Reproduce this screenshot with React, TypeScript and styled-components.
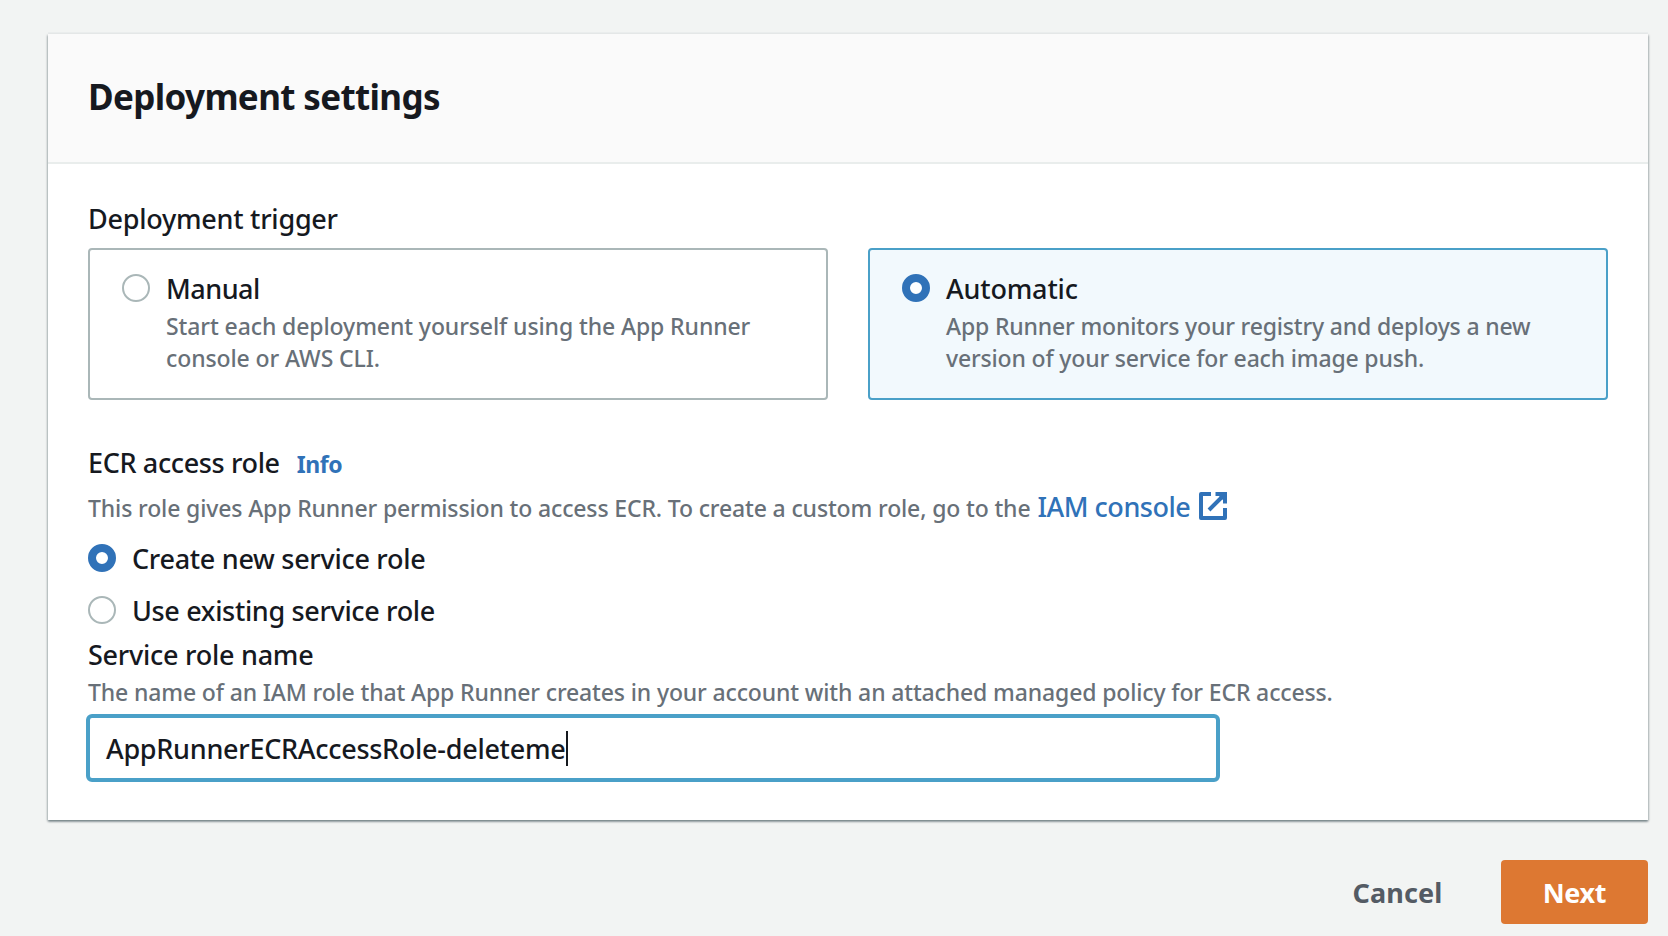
import React from 'react';
import styled, { createGlobalStyle, css } from 'styled-components';

const color = {
  page: '#f2f4f3',
  text: '#16191f',
  secondary: '#687078',
  link: '#3072b8',
  focus: '#4aa0c8',
  control: '#aab7b8',
  divider: '#e9edec',
  selected: '#f2f9fd',
  primary: '#dd7832',
};

const GlobalStyle = createGlobalStyle`
  * { box-sizing: border-box; }
  body {
    margin: 0;
    background: ${color.page};
    color: ${color.text};
    font-family: "Noto Sans", "Open Sans", sans-serif;
    font-size: 27px;
    font-weight: 500;
    line-height: 44px;
    overflow: hidden;
  }
`;

const Page = styled.main`
  height: 936px;
  padding: 34px 20px 0 48px;
`;

const Panel = styled.section`
  height: 786px;
  background: #fff;
  box-shadow: 0 2px 2px 0 rgba(0, 28, 36, 0.3), 1px 1px 2px 0 rgba(0, 28, 36, 0.2),
    -1px 1px 2px 0 rgba(0, 28, 36, 0.2), 0 -2px 0 0 #eaeded;
`;

const PanelHeader = styled.header`
  display: flex;
  align-items: center;
  height: 130px;
  padding: 0 40px 2px;
  background: #fafafa;
  border-bottom: 2px solid ${color.divider};
`;

const Title = styled.h2`
  margin: 0;
  font-size: 35px;
  font-weight: 700;
  letter-spacing: -0.64px;
`;

const PanelBody = styled.div`
  padding: 32px 40px 0;
`;

const Label = styled.div<{ $spacing?: number }>`
  display: flex;
  align-items: baseline;
  height: 44px;
  padding-top: 1px;
  letter-spacing: ${(p) => p.$spacing ?? -0.25}px;
  white-space: nowrap;
`;

const Description = styled.div<{ $spacing?: number }>`
  color: ${color.secondary};
  font-size: 23px;
  line-height: 32px;
  letter-spacing: ${(p) => p.$spacing ?? -0.14}px;
  white-space: nowrap;
`;

const Tiles = styled.div`
  display: grid;
  grid-template-columns: 1fr 1fr;
  gap: 40px;
  margin: 8px 0 40px;
`;

const Tile = styled.label<{ $selected?: boolean }>`
  display: flex;
  gap: 16px;
  height: 152px;
  padding: 16px 32px;
  border: 2px solid ${(p) => (p.$selected ? color.focus : color.control)};
  border-radius: 4px;
  background: ${(p) => (p.$selected ? color.selected : '#fff')};
`;

const Radio = styled.span<{ $checked?: boolean }>`
  flex: none;
  width: 28px;
  height: 28px;
  margin-top: 8px;
  border-radius: 50%;
  background: #fff;
  border: 2px solid ${color.control};
  ${(p) =>
    p.$checked &&
    css`
      border: 8px solid ${color.link};
    `}
`;

const RadioGroup = styled.div`
  display: flex;
  flex-direction: column;
  gap: 8px;
  padding-top: 8px;
`;

const RadioRow = styled.label`
  display: flex;
  gap: 16px;
  height: 44px;
`;

const InfoLink = styled.a`
  margin-left: 17px;
  color: ${color.link};
  font-size: 23px;
  font-weight: 700;
  letter-spacing: -0.4px;
`;

const RoleDescription = styled(Description)`
  display: flex;
  align-items: baseline;
  height: 44px;
  padding-top: 1px;
  line-height: 44px;
`;

const ConsoleLink = styled.a`
  display: flex;
  margin-left: 7px;
  color: ${color.link};
  font-size: 27px;
  letter-spacing: -0.48px;
`;

const ExternalIcon = styled.svg`
  width: 28px;
  height: 28px;
  margin: 7px 0 0 9px;
`;

const TextField = styled.div`
  display: flex;
  align-items: center;
  width: 1134px;
  height: 68px;
  margin: 6px 0 0 -2px;
  padding: 2px 16px 0;
  border: 4px solid ${color.focus};
  border-radius: 6px;
  background: #fff;
  letter-spacing: -0.28px;
`;

const Caret = styled.span`
  width: 2px;
  height: 35px;
  margin: 0 0 2px 1px;
  background: ${color.text};
`;

const Actions = styled.footer`
  display: flex;
  justify-content: flex-end;
  margin-top: 40px;
`;

const Button = styled.button<{ $primary?: boolean }>`
  width: ${(p) => (p.$primary ? 147 : 167)}px;
  height: 64px;
  padding: 2px 0 0;
  border: 0;
  border-radius: 4px;
  background: ${(p) => (p.$primary ? color.primary : 'transparent')};
  color: ${(p) => (p.$primary ? '#fff' : '#545b64')};
  font: 700 27px/44px "Noto Sans", "Open Sans", sans-serif;
  letter-spacing: ${(p) => (p.$primary ? -0.35 : 0.1)}px;
`;

const CancelButton = styled(Button)`
  margin-right: 20px;
`;

export default function App() {
  return (
    <Page>
      <GlobalStyle />
      <Panel>
        <PanelHeader>
          <Title>Deployment settings</Title>
        </PanelHeader>
        <PanelBody>
          <Label>Deployment trigger</Label>
          <Tiles>
            <Tile>
              <Radio />
              <div>
                <Label $spacing={-0.5}>Manual</Label>
                <Description $spacing={-0.1}>
                  Start each deployment yourself using the App Runner
                  <br />
                  console or AWS CLI.
                </Description>
              </div>
            </Tile>
            <Tile $selected>
              <Radio $checked />
              <div>
                <Label $spacing={-0.18}>Automatic</Label>
                <Description $spacing={-0.17}>
                  App Runner monitors your registry and deploys a new
                  <br />
                  version of your service for each image push.
                </Description>
              </div>
            </Tile>
          </Tiles>
          <Label $spacing={-0.36}>
            ECR access role <InfoLink>Info</InfoLink>
          </Label>
          <RoleDescription>
            This role gives App Runner permission to access ECR. To create a custom role, go to the
            <ConsoleLink>
              IAM console
              <ExternalIcon viewBox="0 0 28 28" fill="none" stroke="currentColor" strokeWidth="4">
                <path d="M12 2H2v24h24V16" strokeLinejoin="round" />
                <path d="M16.5 2H26v9.5M25 3 10 18" />
                <path d="M19 3h6v6Z" fill="currentColor" stroke="none" />
              </ExternalIcon>
            </ConsoleLink>
          </RoleDescription>
          <RadioGroup>
            <RadioRow>
              <Radio $checked />
              <Label $spacing={-0.29}>Create new service role</Label>
            </RadioRow>
            <RadioRow>
              <Radio />
              <Label $spacing={-0.34}>Use existing service role</Label>
            </RadioRow>
          </RadioGroup>
          <Label>Service role name</Label>
          <Description>
            The name of an IAM role that App Runner creates in your account with an attached managed policy for ECR access.
          </Description>
          <TextField>
            AppRunnerECRAccessRole-deleteme
            <Caret />
          </TextField>
        </PanelBody>
      </Panel>
      <Actions>
        <CancelButton>Cancel</CancelButton>
        <Button $primary>Next</Button>
      </Actions>
    </Page>
  );
}
